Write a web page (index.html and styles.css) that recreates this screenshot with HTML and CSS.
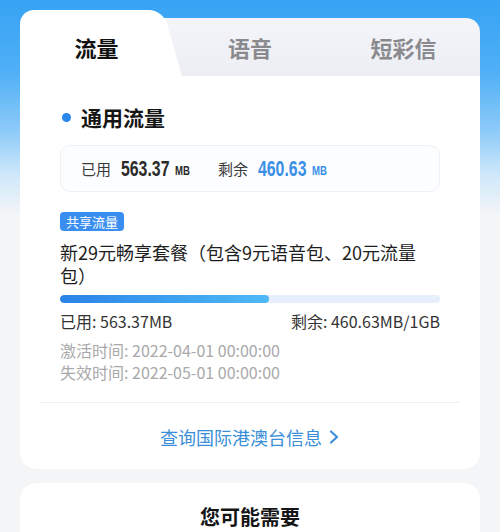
FILE: index.html
```html
<!DOCTYPE html>
<html lang="zh-CN">
<head>
<meta charset="utf-8">
<link rel="stylesheet" href="styles.css">
</head>
<body>
<div class="page">
  <div class="card">
    <div class="tabs">
      <div class="tab active"><span class="tab-label">流量</span></div>
      <div class="tab second"><span class="tab-label">语音</span></div>
      <div class="tab last"><span class="tab-label">短彩信</span></div>
    </div>
    <div class="card-body">
      <div class="section-title"><span class="dot"></span>通用流量</div>
      <div class="stats">
        <span class="stat-label">已用</span>
        <span class="stat-num">563.37</span>
        <span class="stat-unit">MB</span>
        <span class="stat-label second-label">剩余</span>
        <span class="stat-num blue">460.63</span>
        <span class="stat-unit blue">MB</span>
      </div>
      <div class="badge-row"><span class="badge">共享流量</span></div>
      <div class="plan-name">新29元畅享套餐（包含9元语音包、20元流量包）</div>
      <div class="bar"><div class="bar-fill" style="width:55%"></div></div>
      <div class="usage">
        <span>已用: 563.37MB</span>
        <span>剩余: 460.63MB/1GB</span>
      </div>
      <div class="dates">
        <div>激活时间: 2022-04-01 00:00:00</div>
        <div>失效时间: 2022-05-01 00:00:00</div>
      </div>
      <div class="divider"></div>
      <div class="link">查询国际港澳台信息<svg class="chev" width="12" height="16" viewBox="0 0 12 16"><path d="M3 2.5 L9 8 L3 13.5" fill="none" stroke="#3a8fd8" stroke-width="2.2" stroke-linecap="round" stroke-linejoin="round"/></svg></div>
    </div>
  </div>
  <div class="card2">
    <div class="card2-title">您可能需要</div>
  </div>
</div>
</body>
</html>
```

FILE: styles.css
```css
html, body {
  margin: 0;
  padding: 0;
}
body {
  width: 500px;
  height: 532px;
  overflow: hidden;
  font-family: "Noto Sans CJK SC", "Noto Sans", sans-serif;
  background: linear-gradient(180deg, #37a3f4 0px, #4eaff6 70px, #8ccaf8 130px, #cfe8fb 175px, #f4f5f7 215px, #f4f5f7 100%);
  color: #222;
}
.page {
  padding: 10px 20px 0;
}
.tabs {
  display: flex;
  align-items: flex-end;
  height: 66px;
}
.tab {
  height: 58px;
  display: flex;
  align-items: center;
  justify-content: center;
  font-size: 22px;
  font-weight: 700;
  color: #8a8a8e;
  background: linear-gradient(180deg, #f4f5f9, #eceef4);
  box-sizing: border-box;
}
.tab.active {
  flex: 0 0 153px;
  height: 66px;
  background: transparent;
  color: #111;
  position: relative;
  z-index: 2;
  padding-top: 8px;
}
.tab.active::before {
  content: "";
  position: absolute;
  left: 0;
  top: 0;
  bottom: 0;
  width: 130px;
  background: #fff;
  border-top-left-radius: 14px;
}
.tab.active::after {
  content: "";
  position: absolute;
  top: 0;
  bottom: 0;
  right: -9px;
  width: 50px;
  background: #fff;
  border-top-right-radius: 14px;
  transform: skewX(16deg);
  transform-origin: bottom right;
}
.tab-label {
  position: relative;
  z-index: 1;
  line-height: 28px;
}
.tab.second {
  flex: 1;
  margin-left: -20px;
  padding-left: 20px;
}
.tab.last {
  flex: 0 0 153px;
  border-top-right-radius: 14px;
}
.card-body {
  background: #fff;
  border-radius: 0 0 16px 16px;
  padding: 27px 40px 20px;
}
.section-title {
  display: flex;
  align-items: center;
  font-size: 21px;
  font-weight: 700;
  line-height: 28px;
  color: #151515;
}
.dot {
  width: 9px;
  height: 9px;
  border-radius: 50%;
  background: #2a88ec;
  margin: 0 10px 0 2px;
}
.stats {
  margin-top: 14px;
  height: 47px;
  box-sizing: border-box;
  border: 1px solid #eef0f4;
  background: #fcfdfe;
  border-radius: 10px;
  display: flex;
  align-items: center;
  padding-left: 20px;
  color: #333;
}
.stat-label {
  font-size: 15px;
  color: #3a3a3a;
  margin-right: 10px;
}
.second-label {
  margin-left: 28px;
}
.stat-num {
  display: inline-block;
  font-family: "Liberation Sans", Arial, sans-serif;
  font-weight: 700;
  font-size: 22px;
  line-height: 24px;
  color: #2b2b2b;
  transform: scaleX(0.72);
  transform-origin: left center;
  margin-right: -13px;
}
.stat-unit {
  display: inline-block;
  font-family: "Liberation Sans", Arial, sans-serif;
  font-weight: 700;
  font-size: 12px;
  color: #2b2b2b;
  padding-top: 5px;
  transform: scaleX(0.8);
  transform-origin: left center;
  margin-right: -4px;
}
.blue {
  color: #3a8fe6;
}
.badge-row {
  margin-top: 20px;
  display: flex;
}
.badge {
  background: #3a8ef0;
  color: #fff;
  font-size: 13px;
  line-height: 19px;
  height: 19px;
  padding: 0 6px;
  border-radius: 4px;
}
.plan-name {
  margin-top: 10px;
  font-size: 18px;
  line-height: 23px;
  color: #1e1e1e;
}
.bar {
  margin-top: 8px;
  height: 8px;
  border-radius: 4px;
  background: #e6effb;
  overflow: hidden;
}
.bar-fill {
  height: 100%;
  border-radius: 4px;
  background: linear-gradient(90deg, #2a84e8, #4fb9f6);
}
.usage {
  margin-top: 8px;
  display: flex;
  justify-content: space-between;
  font-size: 16px;
  line-height: 20px;
  color: #333;
}
.dates {
  margin-top: 8px;
  font-size: 16px;
  line-height: 22px;
  color: #a9a9ab;
}
.divider {
  margin: 19px -20px 0;
  height: 1px;
  background: #eeeeee;
}
.link {
  padding-top: 22px;
  display: flex;
  justify-content: center;
  align-items: center;
  font-size: 18px;
  line-height: 24px;
  color: #3a8fd8;
}
.chev {
  margin-left: 6px;
}
.card2 {
  margin-top: 14px;
  background: #fff;
  border-radius: 16px 16px 0 0;
  padding-top: 20px;
  height: 50px;
  box-sizing: border-box;
}
.card2-title {
  text-align: center;
  font-size: 20px;
  font-weight: 700;
  line-height: 28px;
  color: #151515;
}
```
